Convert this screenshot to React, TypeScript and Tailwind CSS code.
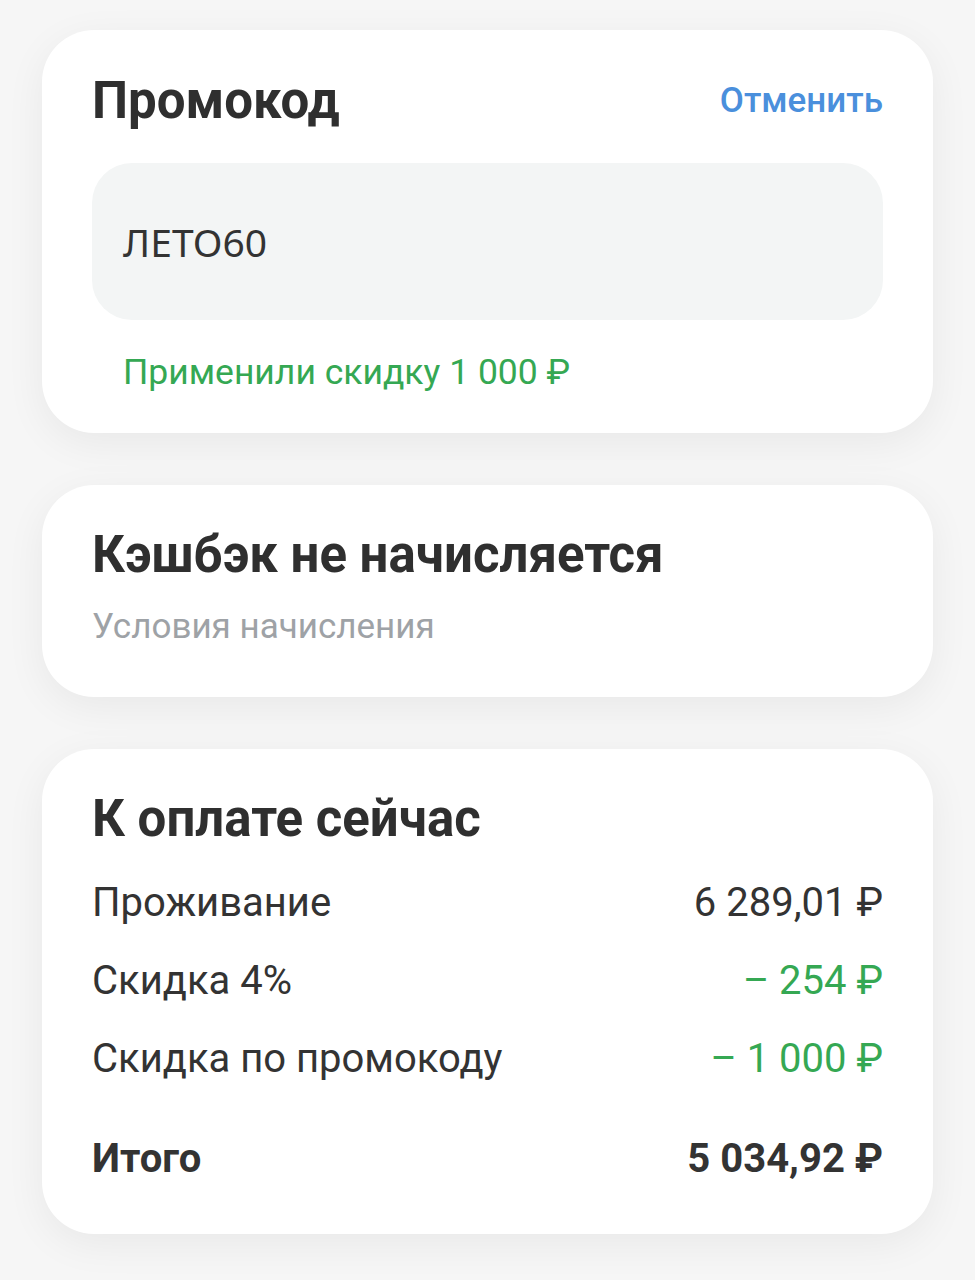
import React from 'react';

const font = { fontFamily: 'Roboto, "Noto Sans", sans-serif' };

interface RowProps {
  label: string;
  value: string;
  green?: boolean;
  bold?: boolean;
}

function Row({ label, value, green, bold }: RowProps) {
  return (
    <div className="flex h-[78px] items-center justify-between">
      <span className={bold ? 'text-[40px] font-bold text-[#333333]' : 'text-[40px] text-[#333333]'}>{label}</span>
      <span
        className={
          bold
            ? 'text-[40px] font-bold text-[#333333]'
            : green
            ? 'text-[40px] text-[#35a853]'
            : 'text-[40px] text-[#333333]'
        }
      >
        {value}
      </span>
    </div>
  );
}

export default function App() {
  return (
    <div className="min-h-[1280px] bg-[#f6f6f6] px-[42px] pt-[30px] pb-[45px]" style={font}>
      <div className="flex flex-col gap-[52px]">
        {/* Promo code */}
        <div className="rounded-[52px] bg-white px-[50px] pt-[45px] pb-[41px] shadow-[0_10px_40px_rgba(0,0,0,0.06)]">
          <div className="flex items-center justify-between leading-[52px]">
            <h2 className="text-[51px] font-bold text-[#2f2f2f]">Промокод</h2>
            <button className="text-[35px] font-medium text-[#4a8fdc]">Отменить</button>
          </div>
          <div className="mt-[36px] flex h-[157px] items-center rounded-[40px] bg-[#f3f5f5] px-[31px]">
            <span className="text-[39px] leading-[44px] text-[#333333]" style={{ fontFamily: '"Noto Sans", "Open Sans", sans-serif' }}>
              ЛЕТО60
            </span>
          </div>
          <p className="mt-[32px] px-[31px] text-[35.5px] leading-[40px] text-[#35a853]">Применили скидку 1 000 ₽</p>
        </div>

        {/* Cashback */}
        <div className="rounded-[52px] bg-white px-[50px] pt-[44px] pb-[50px] shadow-[0_10px_40px_rgba(0,0,0,0.06)]">
          <h2 className="text-[51px] font-bold leading-[52px] text-[#2f2f2f]">Кэшбэк не начисляется</h2>
          <p className="mt-[26px] text-[35px] leading-[40px] text-[#9ea2a6]">Условия начисления</p>
        </div>

        {/* Payment */}
        <div className="rounded-[52px] bg-white px-[50px] pt-[44px] pb-[36px] shadow-[0_10px_40px_rgba(0,0,0,0.06)]">
          <h2 className="text-[51px] font-bold leading-[52px] text-[#2f2f2f]">К оплате сейчас</h2>
          <div className="mt-[19px]">
            <Row label="Проживание" value="6 289,01 ₽" />
            <Row label="Скидка 4%" value="– 254 ₽" green />
            <Row label="Скидка по промокоду" value="– 1 000 ₽" green />
            <div className="mt-[22px]">
              <Row label="Итого" value="5 034,92 ₽" bold />
            </div>
          </div>
        </div>
      </div>
    </div>
  );
}
